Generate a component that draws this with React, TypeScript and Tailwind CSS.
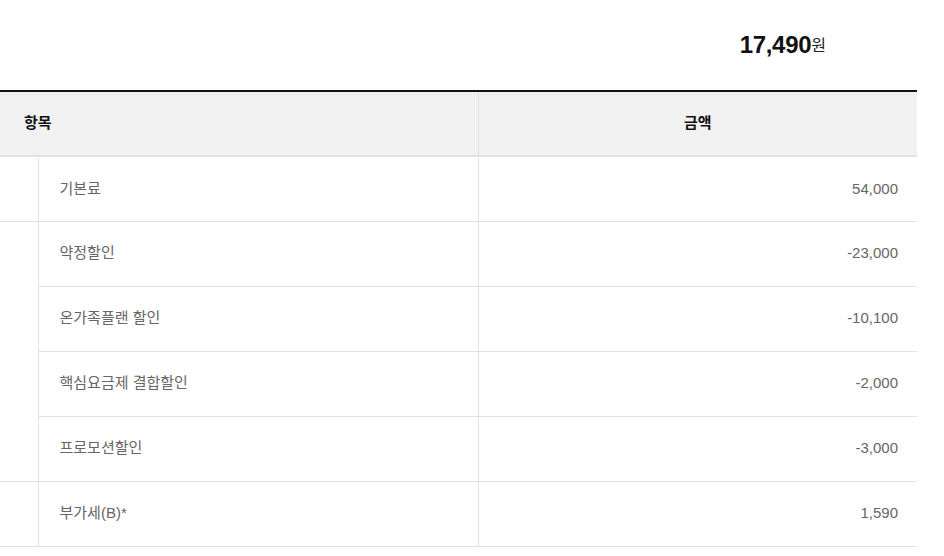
const rows = [
  { group: 'a', label: '기본료', amount: '54,000' },
  { group: 'b', label: '약정할인', amount: '-23,000' },
  { group: 'b', label: '온가족플랜 할인', amount: '-10,100' },
  { group: 'b', label: '핵심요금제 결합할인', amount: '-2,000' },
  { group: 'b', label: '프로모션할인', amount: '-3,000' },
  { group: 'c', label: '부가세(B)*', amount: '1,590' },
]

export default function App() {
  return (
    <div className="w-[944px] h-[556px] bg-white overflow-hidden font-['Liberation_Sans','Noto_Sans_CJK_KR',sans-serif]">
      {/* Total */}
      <div className="h-[90px] w-[917px] flex items-start justify-end pr-[91px] pt-[29px]">
        <span className="text-[24px] font-bold text-[#111] leading-[32px] tracking-[-0.3px]">17,490</span>
        <span className="text-[16px] text-[#222] leading-[32px] mt-[1px]">원</span>
      </div>

      <table className="w-[917px] border-collapse table-fixed border-t-2 border-t-[#111]">
        <colgroup>
          <col className="w-[38px]" />
          <col className="w-[440px]" />
          <col />
        </colgroup>
        <thead>
          <tr className="h-[65px] bg-[#f1f1f1] border-b-2 border-b-[#e2e2e2]">
            <th colSpan={2} className="text-left pl-[24px] text-[15px] font-bold text-[#111] border-r border-r-[#e0e0e0]">
              항목
            </th>
            <th className="text-center text-[15px] font-bold text-[#111]">금액</th>
          </tr>
        </thead>
        <tbody>
          {rows.map((r, i) => {
            const first = i === 0 || rows[i - 1].group !== r.group
            const span = rows.filter(x => x.group === r.group).length
            return (
              <tr key={r.label} className="h-[65px]">
                {first && (
                  <td rowSpan={span} className="border-b border-b-[#e2e2e2] border-r border-r-[#e2e2e2]" />
                )}
                <td className="pl-[21px] text-[15px] text-[#666] border-b border-b-[#e2e2e2] border-r border-r-[#e2e2e2]">
                  {r.label}
                </td>
                <td className="text-right pr-[19px] text-[15px] text-[#666] border-b border-b-[#e2e2e2]">
                  {r.amount}
                </td>
              </tr>
            )
          })}
        </tbody>
      </table>
    </div>
  )
}
